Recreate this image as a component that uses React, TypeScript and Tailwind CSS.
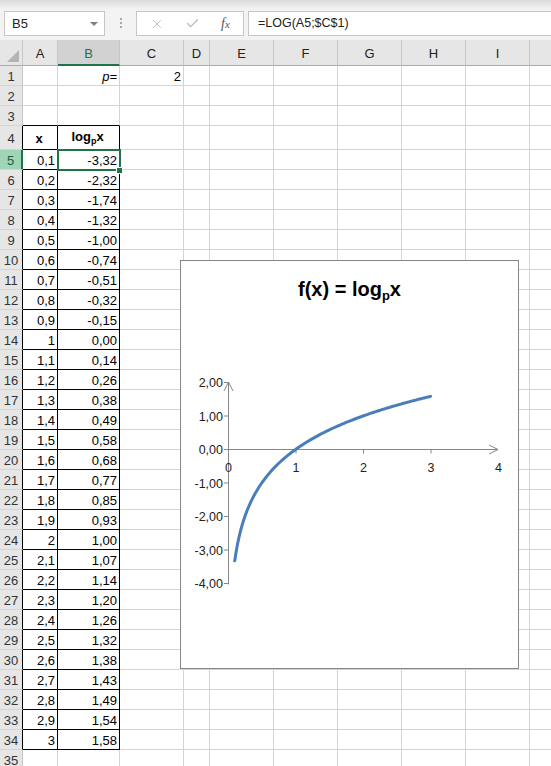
import React from 'react';
import { X, Check } from 'lucide-react';

type Col = { key: string; w: string; label: string };

const COLS: Col[] = [
  { key: 'A', w: 'w-[35px]', label: 'A' },
  { key: 'B', w: 'w-[62px]', label: 'B' },
  { key: 'C', w: 'w-[64px]', label: 'C' },
  { key: 'D', w: 'w-[26px]', label: 'D' },
  { key: 'E', w: 'w-[64px]', label: 'E' },
  { key: 'F', w: 'w-[64px]', label: 'F' },
  { key: 'G', w: 'w-[64px]', label: 'G' },
  { key: 'H', w: 'w-[64px]', label: 'H' },
  { key: 'I', w: 'w-[64px]', label: 'I' },
  // J is only a sliver at the right edge, its letter is off screen
  { key: 'J', w: 'w-[64px]', label: '' },
];

const XS = Array.from({ length: 30 }, (_, i) => (i + 1) / 10);
const fmtX = (v: number) => (Number.isInteger(v) ? String(v) : v.toFixed(1).replace('.', ','));
const fmtY = (v: number) => (Math.log(v) / Math.log(2)).toFixed(2).replace('.', ',');

const ROWS = Array.from({ length: 35 }, (_, i) => i + 1);

const cellContent = (row: number, col: string): React.ReactNode => {
  if (row === 1 && col === 'B') return <span className="italic">p=</span>;
  if (row === 1 && col === 'C') return '2';
  if (row === 4 && col === 'A') return <span className="w-full text-center font-bold">x</span>;
  if (row === 4 && col === 'B')
    return (
      <span className="w-full text-center font-bold">
        log<span className="relative top-[3px] text-[9px]">p</span>x
      </span>
    );
  if (row >= 5 && row <= 34) {
    const v = XS[row - 5];
    if (col === 'A') return fmtX(v);
    if (col === 'B') return fmtY(v);
  }
  return null;
};

const Chart = () => {
  const px = (v: number) => 47 + 67.5 * v;
  const py = (v: number) => 188.5 - 33.5 * v;
  const pts: string[] = [];
  for (let v = 0.1; v <= 3.0001; v += 0.02) {
    pts.push(`${px(v).toFixed(2)},${py(Math.log(v) / Math.log(2)).toFixed(2)}`);
  }
  const yTicks = [2, 1, 0, -1, -2, -3, -4];

  return (
    <div className="absolute left-[180px] top-[260px] z-10 h-[409px] w-[339px] border border-[#868686] bg-white">
      <div className="pt-[16px] text-center text-[20px] font-bold leading-[24px] text-black">
        f(x) = log<span className="relative top-[4px] text-[13px]">p</span>x
      </div>
      <svg className="absolute left-0 top-0" width="339" height="409" viewBox="0 0 339 409">
        <g stroke="#868686" strokeWidth="1" fill="none">
          <line x1="47.5" y1="121" x2="47.5" y2="323.5" />
          <polyline points="43,130 47.5,121 52,130" />
          <line x1="47" y1="188.5" x2="317" y2="188.5" />
          <polyline points="308,184 317,188.5 308,193" />
          {yTicks.map((t) => (
            <line key={t} x1="43" y1={py(t)} x2="47.5" y2={py(t)} />
          ))}
          {[1, 2, 3].map((t) => (
            <line key={t} x1={px(t) + 0.5} y1="188.5" x2={px(t) + 0.5} y2="192.5" />
          ))}
        </g>
        <polyline points={pts.join(' ')} fill="none" stroke="#4a7ebb" strokeWidth="3" strokeLinecap="round" strokeLinejoin="round" />
        <g fill="#222" fontFamily="'Liberation Sans', Arial, sans-serif" fontSize="12.5">
          {yTicks.map((t) => (
            <text key={t} x="42" y={py(t) + 4.5} textAnchor="end">
              {t.toFixed(2).replace('.', ',')}
            </text>
          ))}
          {[0, 1, 2, 3, 4].map((t) => (
            <text key={t} x={px(t) + 0.5} y="211" textAnchor="middle">
              {t}
            </text>
          ))}
        </g>
      </svg>
    </div>
  );
};

export default function App() {
  return (
    <div className="relative h-[766px] w-[551px] overflow-hidden bg-white font-['Liberation_Sans',Arial,sans-serif] text-[13px] text-black">
      {/* formula bar */}
      <div className="h-[40px] bg-[linear-gradient(to_bottom,#dadada_0px,#f3f3f3_9px,#f3f3f3_100%)]">
        <div className="flex items-start pl-[4px] pt-[11px]">
          <div className="flex h-[25px] w-[101px] items-center justify-between border border-[#c6c6c6] bg-white pl-[7px] pr-[6px] text-[13px] text-[#222]">
            <span>B5</span>
            <span className="h-0 w-0 border-l-[4px] border-r-[4px] border-t-[4px] border-l-transparent border-r-transparent border-t-[#808080]" />
          </div>
          <div className="ml-[15px] mt-[7px] flex flex-col gap-[2px]">
            <span className="h-[2px] w-[2px] bg-[#a8a8a8]" />
            <span className="h-[2px] w-[2px] bg-[#a8a8a8]" />
            <span className="h-[2px] w-[2px] bg-[#a8a8a8]" />
          </div>
          <div className="ml-[14px] flex h-[25px] w-[108px] items-center border border-[#c6c6c6] bg-white">
            <X className="ml-[13px] h-[14px] w-[14px] text-[#b8b8b8]" strokeWidth={1.5} />
            <Check className="ml-[21px] h-[15px] w-[15px] text-[#b8b8b8]" strokeWidth={2} />
            <span className="ml-[21px] font-['Liberation_Serif',serif] text-[14px] italic text-[#555]">
              f<span className="text-[11px]">x</span>
            </span>
          </div>
          <div className="ml-[4px] flex h-[25px] flex-1 items-center border border-r-0 border-[#c6c6c6] bg-white pl-[9px] text-[12.5px] text-[#222]">
            =LOG(A5;$C$1)
          </div>
        </div>
      </div>

      {/* grid */}
      <div className="relative">
        <div className="flex h-[26px]">
          <div className="relative box-border w-[23px] shrink-0 border-b border-r border-b-[#ababab] border-r-[#c6c6c6] bg-[#e6e6e6]">
            <span className="absolute bottom-[3px] right-[3px] h-0 w-0 border-b-[12px] border-l-[12px] border-b-[#b4b4b4] border-l-transparent" />
          </div>
          {COLS.map((c) =>
            c.key === 'B' ? (
              <div
                key={c.key}
                className={`${c.w} box-border flex shrink-0 items-center justify-center border-b-2 border-r border-b-[#217346] border-r-[#c6c6c6] bg-[#d2d2d2] pt-[3px] text-[#217346]`}
              >
                {c.label}
              </div>
            ) : (
              <div
                key={c.key}
                className={`${c.w} box-border flex shrink-0 items-center justify-center border-b border-r border-b-[#ababab] border-r-[#c6c6c6] bg-[#e6e6e6] pt-[2px] text-[#222]`}
              >
                {c.label}
              </div>
            ),
          )}
        </div>

        {ROWS.map((r) => {
          const h = r === 4 ? 'h-[24px]' : 'h-[20px]';
          const headBorder =
            r === 5 ? 'border-r-2 border-r-[#217346]' : r >= 4 && r <= 34 ? 'border-r border-r-black' : 'border-r border-r-[#c6c6c6]';
          return (
            <div key={r} className={`flex ${h}`}>
              <div
                className={`box-border flex w-[23px] shrink-0 items-center justify-center border-b border-b-[#d4d4d4] pt-[2px] ${headBorder} ${
                  r === 5 ? 'bg-[#9fd5b7] text-[#1e5e3a]' : 'bg-[#e6e6e6] text-[#333]'
                }`}
              >
                {r}
              </div>
              {COLS.map((c) => {
                const inTable = r >= 4 && r <= 34 && (c.key === 'A' || c.key === 'B');
                const aboveTable = r === 3 && (c.key === 'A' || c.key === 'B');
                const rColor = inTable ? 'border-r-black' : 'border-r-[#d4d4d4]';
                const bColor = inTable || aboveTable ? 'border-b-black' : 'border-b-[#d4d4d4]';
                const pad = r === 4 ? 'pb-[3px]' : 'pb-[1px]';
                return (
                  <div
                    key={c.key}
                    className={`${c.w} box-border flex shrink-0 items-end justify-end border-b border-r pr-[2px] leading-[15px] ${rColor} ${bColor} ${pad}`}
                  >
                    {cellContent(r, c.key)}
                  </div>
                );
              })}
            </div>
          );
        })}

        {/* active cell B5 */}
        <div className="pointer-events-none absolute left-[57px] top-[109px] h-[22px] w-[64px] border-2 border-[#217346]" />
        <div className="pointer-events-none absolute left-[116px] top-[127px] h-[7px] w-[7px] border border-white bg-[#217346]" />
      </div>

      <Chart />
    </div>
  );
}
